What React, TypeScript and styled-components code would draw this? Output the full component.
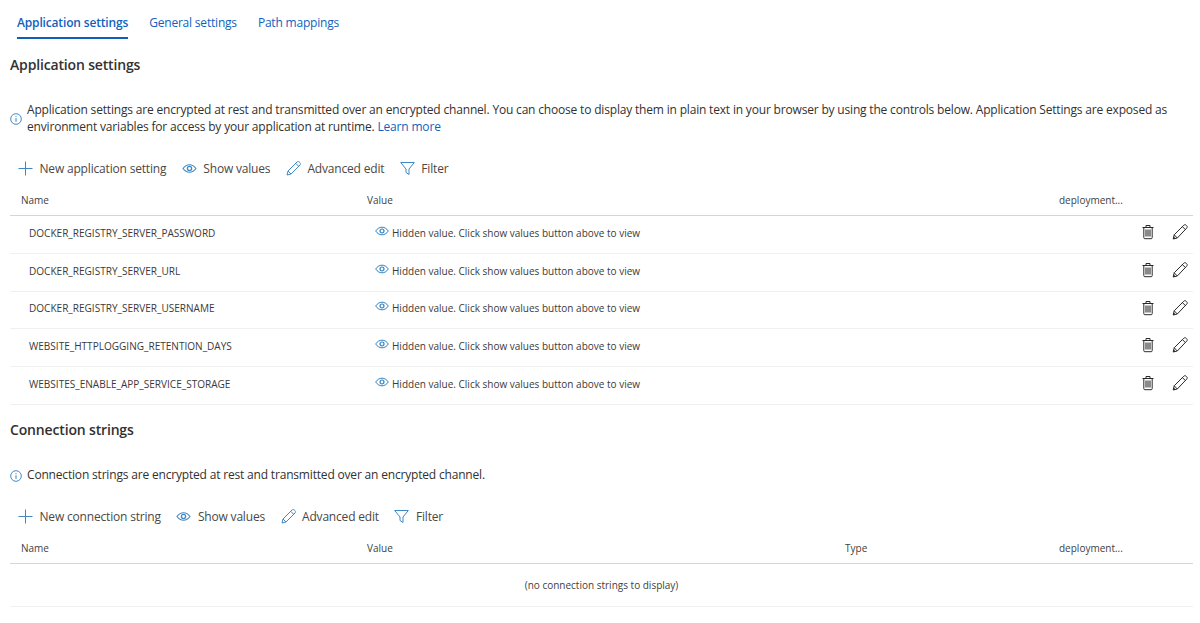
import React from 'react';
import styled, { createGlobalStyle } from 'styled-components';

const Global = createGlobalStyle`
  html, body { margin: 0; padding: 0; background: #fff; }
  body { font-family: "Open Sans", "Noto Sans", sans-serif; color: #323130; }
`;
const Page = styled.div`
  width: 1200px; height: 623px; overflow: hidden; box-sizing: border-box; padding: 0 7px 0 10px;
`;
const Tabs = styled.div`
  display: flex; gap: 21px; padding-left: 7px; height: 39px;
`;
const Tab = styled.div<{ $active?: boolean }>`
  height: 39px; box-sizing: border-box; line-height: 45px; font-size: 12px; white-space: nowrap;
  letter-spacing: ${p => (p.$active ? '-0.16px' : '-0.2px')};
  color: #0f62c0; font-weight: ${p => (p.$active ? 600 : 400)};
  border-bottom: ${p => (p.$active ? '2px solid #0f5fb8' : '2px solid transparent')};
`;
const Heading = styled.h2<{ $top: number }>`
  margin: ${p => p.$top}px 0 0; font-size: 14px; letter-spacing: -0.16px; line-height: 20px; font-weight: 600; color: #323130;
`;
const Info = styled.div<{ $top: number }>`
  margin-top: ${p => p.$top}px; display: flex; align-items: center; gap: 5px; font-size: 12px; letter-spacing: -0.18px; line-height: 17px; color: #323130;
`;
const InfoIcon = styled.svg`
  width: 12px; height: 12px; flex: none; margin-top: 2px;
`;
const InfoText = styled.div`flex: 1; min-width: 0;`;
const Link = styled.span`color: #0f62c0;`;
const Toolbar = styled.div<{ $top: number }>`
  margin-top: ${p => p.$top}px; height: 20px; display: flex; align-items: center; padding-left: 8px; gap: 15.5px;
`;
const Action = styled.div`
  display: flex; align-items: center; gap: 6.5px; font-size: 12px; letter-spacing: -0.18px; color: #4a4846; white-space: nowrap;
`;
const IconSlot = styled.svg`width: 15px; height: 15px; flex: none; color: #3f88c5;`;
const Row = styled.div<{ $head?: boolean; $h: number }>`
  height: ${p => p.$h}px; box-sizing: border-box; display: grid;
  padding: ${p => (p.$head ? '7px 0 0' : '0 0 4px')};
  grid-template-columns: 346px 478px 214px 1fr; align-items: center;
  border-bottom: 1px solid ${p => (p.$head ? '#d6d5d4' : '#f1f0ef')};
`;
const HeadCell = styled.div`
  padding-left: 11px; font-size: 10px; color: #424140; white-space: nowrap;
`;
const NameCell = styled.div`
  padding-left: 19px; font-size: 10.05px; color: #3b3a39; white-space: nowrap;
`;
const ValueCell = styled.div`
  grid-column: 2 / 4; padding-left: 19px; display: flex; align-items: center; gap: 3px;
  font-size: 10px; color: #3b3a39; white-space: nowrap;
`;
const SmallEye = styled.svg`width: 14px; height: 10px; flex: none; color: #2f80c0; margin-top: -4px;`;
const RowActions = styled.div`
  display: flex; justify-content: flex-end; align-items: center; gap: 16px; padding-right: 5px;
`;
const RowIcon = styled.svg`width: 16px; height: 16px; flex: none; color: #2b2a29; margin-top: -1px;`;
const Empty = styled.div`
  height: 43px; box-sizing: border-box; display: flex; align-items: center; justify-content: center;
  border-bottom: 1px solid #f1f0ef; font-size: 10px; color: #424140;
`;

const Plus = () => (
  <IconSlot viewBox="0 0 15 15"><path d="M7.5 0.5v14M0.5 7.5h14" fill="none" stroke="currentColor" strokeWidth="1" /></IconSlot>
);
const Eye = () => (
  <IconSlot viewBox="0 0 15 15" fill="none" stroke="currentColor">
    <path d="M1 7.5C3 4.8 5.2 3.8 7.5 3.8S12 4.8 14 7.5C12 10.2 9.8 11.2 7.5 11.2S3 10.2 1 7.5Z" strokeWidth="1.1" />
    <circle cx="7.5" cy="7.5" r="2.1" strokeWidth="1.3" />
  </IconSlot>
);
const Pencil = () => (
  <IconSlot viewBox="0 0 15 15" fill="none" stroke="currentColor" strokeWidth="1">
    <path d="M1 14l1-4L11 1c.8-.6 1.7-.6 2.3 0l.7.7c.6.7.6 1.5 0 2.3L5 13ZM2 10l3 3M9.8 2.4l2.8 2.8" />
  </IconSlot>
);
const Funnel = () => (
  <IconSlot viewBox="0 0 15 15" fill="none" stroke="currentColor" strokeWidth="1">
    <path d="M0.7 1.5h13.6L9 8v5.5L6 11.5V8Z" strokeLinejoin="round" />
  </IconSlot>
);
const Circle = () => (
  <InfoIcon viewBox="0 0 12 12" fill="none" stroke="#2f80c0">
    <circle cx="6" cy="6" r="5.3" strokeWidth="0.9" />
    <path d="M6 5.2v3.6" strokeWidth="1" />
    <circle cx="6" cy="3.5" r="0.6" fill="#2f80c0" stroke="none" />
  </InfoIcon>
);
const Trash = () => (
  <RowIcon viewBox="0 0 16 16" fill="none" stroke="currentColor" strokeWidth="1">
    <path d="M2.5 3.5h11M6 3.5V1.5h4v2M3.8 3.5v10.2c0 .6.4 1 1 1h6.4c.6 0 1-.4 1-1V3.5" />
    <path d="M6 5.5v7M8 5.5v7M10 5.5v7" strokeWidth="1.1" />
  </RowIcon>
);
const EditPen = () => (
  <RowIcon viewBox="0 0 16 16" fill="none" stroke="currentColor" strokeWidth="1">
    <path d="M1.2 15l1-4.2L11.8 1.2c.8-.7 1.7-.7 2.3 0l.6.6c.7.7.7 1.6 0 2.3L5.3 14Z" />
    <path d="M2.2 10.8l3.1 3.2M10.4 2.6l3 3" />
    <path d="M1.2 15l.6-2.4 1.8 1.8Z" fill="currentColor" stroke="none" />
  </RowIcon>
);

const settings: [string, number][] = [
  ['DOCKER_REGISTRY_SERVER_PASSWORD', 38],
  ['DOCKER_REGISTRY_SERVER_URL', 38],
  ['DOCKER_REGISTRY_SERVER_USERNAME', 37],
  ['WEBSITE_HTTPLOGGING_RETENTION_DAYS', 38],
  ['WEBSITES_ENABLE_APP_SERVICE_STORAGE', 38],
];

const Actions = ({ label }: { label: string }) => (
  <Toolbar $top={23}>
    <Action><Plus />{label}</Action>
    <Action><Eye />Show values</Action>
    <Action><Pencil />Advanced edit</Action>
    <Action><Funnel />Filter</Action>
  </Toolbar>
);

export default function App() {
  return (
    <Page>
      <Global />
      <Tabs>
        <Tab $active>Application settings</Tab>
        <Tab>General settings</Tab>
        <Tab>Path mappings</Tab>
      </Tabs>
      <Heading $top={16}>Application settings</Heading>
      <Info $top={26}>
        <Circle />
        <InfoText>
          Application settings are encrypted at rest and transmitted over an encrypted channel. You can choose to display them in plain text in your browser by using the controls below. Application Settings are exposed as environment variables for access by your application at runtime. <Link>Learn more</Link>
        </InfoText>
      </Info>
      <Actions label="New application setting" />
      <Row $head $h={38}>
        <HeadCell>Name</HeadCell>
        <HeadCell>Value</HeadCell>
        <span />
        <HeadCell>deployment...</HeadCell>
      </Row>
      {settings.map(([name, h]) => (
        <Row key={name} $h={h}>
          <NameCell>{name}</NameCell>
          <ValueCell><SmallEye viewBox="0 0 14 10" fill="none" stroke="currentColor"><path d="M.7 5C2.4 2.4 4.6 1.2 7 1.2S11.6 2.4 13.3 5C11.6 7.6 9.4 8.8 7 8.8S2.4 7.6.7 5Z" /><circle cx="7" cy="5" r="2" strokeWidth="1.2" /></SmallEye>Hidden value. Click show values button above to view</ValueCell>
          <RowActions><Trash /><EditPen /></RowActions>
        </Row>
      ))}
      <Heading $top={15}>Connection strings</Heading>
      <Info $top={26}>
        <Circle />
        <InfoText>Connection strings are encrypted at rest and transmitted over an encrypted channel.</InfoText>
      </Info>
      <Actions label="New connection string" />
      <Row $head $h={38}>
        <HeadCell>Name</HeadCell>
        <HeadCell>Value</HeadCell>
        <HeadCell>Type</HeadCell>
        <HeadCell>deployment...</HeadCell>
      </Row>
      <Empty>(no connection strings to display)</Empty>
    </Page>
  );
}
